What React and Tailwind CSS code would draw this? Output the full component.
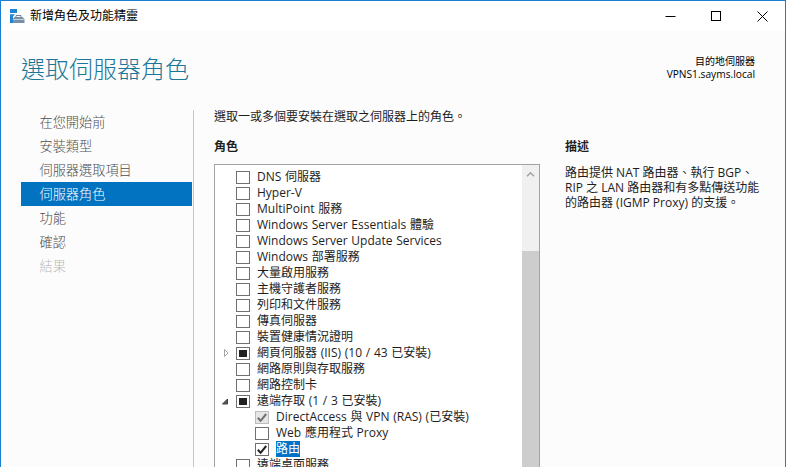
import React from "react";

const STEPS = [
  { label: "在您開始前" },
  { label: "安裝類型" },
  { label: "伺服器選取項目" },
  { label: "伺服器角色", state: "active" },
  { label: "功能" },
  { label: "確認" },
  { label: "結果", state: "disabled" },
];

const ROLES = [
  { label: "DNS 伺服器" },
  { label: "Hyper-V" },
  { label: "MultiPoint 服務" },
  { label: "Windows Server Essentials 體驗" },
  { label: "Windows Server Update Services" },
  { label: "Windows 部署服務" },
  { label: "大量啟用服務" },
  { label: "主機守護者服務" },
  { label: "列印和文件服務" },
  { label: "傳真伺服器" },
  { label: "裝置健康情況證明" },
  { label: "網頁伺服器 (IIS) (10 / 43 已安裝)", check: "partial", arrow: "closed" },
  { label: "網路原則與存取服務" },
  { label: "網路控制卡" },
  { label: "遠端存取 (1 / 3 已安裝)", check: "partial", arrow: "open" },
  { label: "DirectAccess 與 VPN (RAS) (已安裝)", check: "installed", child: true },
  { label: "Web 應用程式 Proxy", child: true },
  { label: "路由", check: "checked", child: true, selected: true },
  { label: "遠端桌面服務" },
];

function CheckBox({ state }) {
  const installed = state === "installed";
  return (
    <svg width="14" height="13" viewBox="0 0 14 13" className="block shrink-0">
      <rect
        x="0.5" y="0.5" width="13" height="12"
        fill={installed ? "#e6e6e6" : "#fff"}
        stroke={installed ? "#bcbcbc" : "#707070"}
      />
      {state === "partial" && <rect x="3" y="3" width="8" height="7" fill="#212121" />}
      {(state === "checked" || installed) && (
        <path d="M2.8 6.8 L5.6 9.8 L11.2 3" fill="none" stroke={installed ? "#707070" : "#212121"} strokeWidth="2" />
      )}
    </svg>
  );
}

function Arrow({ kind }) {
  return (
    <svg width="8" height="10" viewBox="0 0 8 10" className="block shrink-0">
      {kind === "closed" && <path d="M2.5 1.5 L6 5 L2.5 8.5 Z" fill="#fff" stroke="#a6a6a6" />}
      {kind === "open" && <path d="M5.5 3 V8 H0.5 Z" fill="#595959" stroke="#404040" />}
    </svg>
  );
}

function RoleRow({ role }) {
  return (
    <div className="flex h-4 shrink-0 items-center whitespace-nowrap pl-[7px]">
      <Arrow kind={role.arrow} />
      <div className={role.child ? "ml-[25px]" : "ml-1.5"}>
        <CheckBox state={role.check} />
      </div>
      <span
        className={
          role.selected
            ? "ml-[7px] h-4 bg-[#0173c7] leading-4 text-white"
            : "ml-[7px] h-4 leading-4 [word-spacing:0.6px]"
        }
      >
        {role.label}
      </span>
    </div>
  );
}

function TitleBar() {
  return (
    <header className="flex h-[30px] shrink-0 items-center bg-white pl-[9px]">
      <svg width="15" height="15" viewBox="0 0 15 15" className="block">
        <path d="M0 0 H7 V4 H0 Z M0 5.3 H5 L3 7.5 V14 H0 Z" fill="#1d87d6" />
        <path d="M6 8 V6.5 H11 V8" fill="none" stroke="#6f8496" />
        <path d="M4.5 8 H12.5 L14.5 10 V14 H3 V9.5 Z" fill="#7890a3" />
        <path d="M3 10.5 H14.5" stroke="#dbe3e9" strokeWidth="0.8" />
      </svg>
      <h1 className="ml-[5px] text-xs leading-4 text-black">新增角色及功能精靈</h1>
      <div className="ml-auto mr-[17px] flex items-center gap-[35px]">
        <svg width="11" height="11" viewBox="0 0 11 11"><path d="M0.5 5.5 H10.5" stroke="#000" /></svg>
        <svg width="11" height="11" viewBox="0 0 11 11"><rect x="0.5" y="0.5" width="9" height="9" fill="none" stroke="#000" /></svg>
        <svg width="11" height="11" viewBox="0 0 11 11"><path d="M0.5 0.5 L10.5 10.5 M10.5 0.5 L0.5 10.5" stroke="#000" /></svg>
      </div>
    </header>
  );
}

export default function App() {
  return (
    <div className="flex h-[467px] w-[786px] flex-col overflow-hidden border-x border-t border-[#1a7fd3] bg-[#fcfcfc] font-['Open_Sans','Noto_Sans_CJK_TC',sans-serif] text-xs text-[#1e1e1e]">
      <TitleBar />
      <div className="flex h-[79px] shrink-0 justify-between pl-5 pr-[30px]">
        <h2 className="mt-5 text-2xl font-light leading-9 text-[#1a7799]">選取伺服器角色</h2>
        <div className="mt-[24px] text-right text-[10px] leading-[13px] text-black">
          <p>目的地伺服器</p>
          <p className="text-[10.2px]">VPNS1.sayms.local</p>
        </div>
      </div>
      <div className="flex min-h-0 flex-1">
        <nav className="ml-5 w-[173px] shrink-0 border-r border-[#c6c6c6] pr-px font-light">
          {STEPS.map((s) => (
            <div
              key={s.label}
              className={
                s.state === "active"
                  ? "h-6 bg-[#0173c0] pl-[18.5px] text-[13.2px] leading-6 text-white"
                  : s.state === "disabled"
                  ? "h-6 pl-[18.5px] text-[13.2px] leading-6 text-[#b8b8b8]"
                  : "h-6 pl-[18.5px] text-[13.2px] leading-6 text-[#4d4d4d]"
              }
            >
              {s.label}
            </div>
          ))}
        </nav>
        <main className="ml-5 flex w-[326px] shrink-0 flex-col">
          <p className="h-[29px] leading-[14px]">選取一或多個要安裝在選取之伺服器上的角色。</p>
          <h3 className="h-[25px] font-semibold leading-4">角色</h3>
          <div className="flex min-h-0 flex-1 overflow-hidden border-x border-t border-[#a3a3a3] bg-white">
            <div className="flex min-w-0 flex-1 flex-col pt-1">
              {ROLES.map((r) => <RoleRow key={r.label} role={r} />)}
            </div>
            <div className="flex w-[17px] shrink-0 flex-col bg-[#f0f0f0]">
              <div className="flex h-[86px] justify-center pt-1.5">
                <svg width="9" height="7" viewBox="0 0 9 7"><path d="M1 5.2 L4.5 1.7 L8 5.2" fill="none" stroke="#a3a3a3" strokeWidth="1.5" /></svg>
              </div>
              <div className="flex-1 bg-[#cdcdcd]" />
            </div>
          </div>
        </main>
        <aside className="ml-[25px] flex-1 pt-[29px]">
          <h3 className="leading-4 font-semibold">描述</h3>
          <div className="mt-[10px] whitespace-nowrap leading-[15px]">
            <p>路由提供 NAT 路由器、執行 BGP、</p>
            <p>RIP 之 LAN 路由器和有多點傳送功能</p>
            <p>的路由器 (IGMP Proxy) 的支援。</p>
          </div>
        </aside>
      </div>
    </div>
  );
}
